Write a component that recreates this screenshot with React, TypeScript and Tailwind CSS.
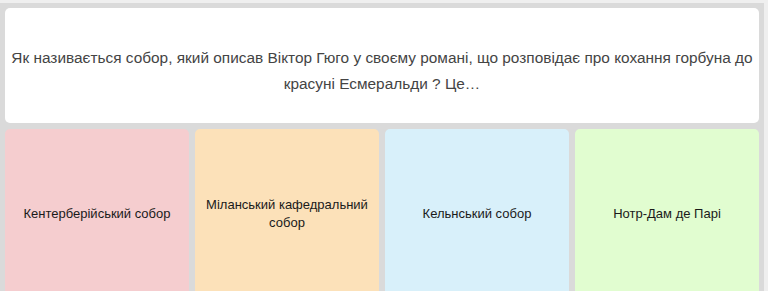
import React from 'react';

const answers = [
  { text: 'Кентерберійський собор', bg: 'bg-[#f5cdcf]' },
  { text: 'Міланський кафедральний собор', bg: 'bg-[#fce1b9]' },
  { text: 'Кельнський собор', bg: 'bg-[#d8f0fa]' },
  { text: 'Нотр-Дам де Парі', bg: 'bg-[#e1fdd0]' },
];

export default function App() {
  return (
    <div className="w-[768px] h-[291px] overflow-hidden bg-[#efefef] pt-[3px] font-['Liberation_Sans',Arial,sans-serif]">
      <div className="w-[764px] h-[300px] bg-[#dadada] px-[5px] pt-[5px] flex flex-col gap-[6px]">
        <div className="h-[115px] bg-white rounded-[5px] flex items-center justify-center px-[6px] pt-[10px] text-center text-[15.4px] leading-[26px] text-[#444]">
          Як називається собор, який описав Віктор Гюго у своєму романі, що розповідає про кохання горбуна до красуні Есмеральди ? Це…
        </div>
        <div className="grid grid-cols-4 gap-[6px]">
          {answers.map((a) => (
            <div
              key={a.text}
              className={`${a.bg} h-[170px] rounded-[5px] flex items-center justify-center px-[10px] text-center text-[13px] leading-[18px] text-[#1a1a1a]`}
            >
              {a.text}
            </div>
          ))}
        </div>
      </div>
    </div>
  );
}
